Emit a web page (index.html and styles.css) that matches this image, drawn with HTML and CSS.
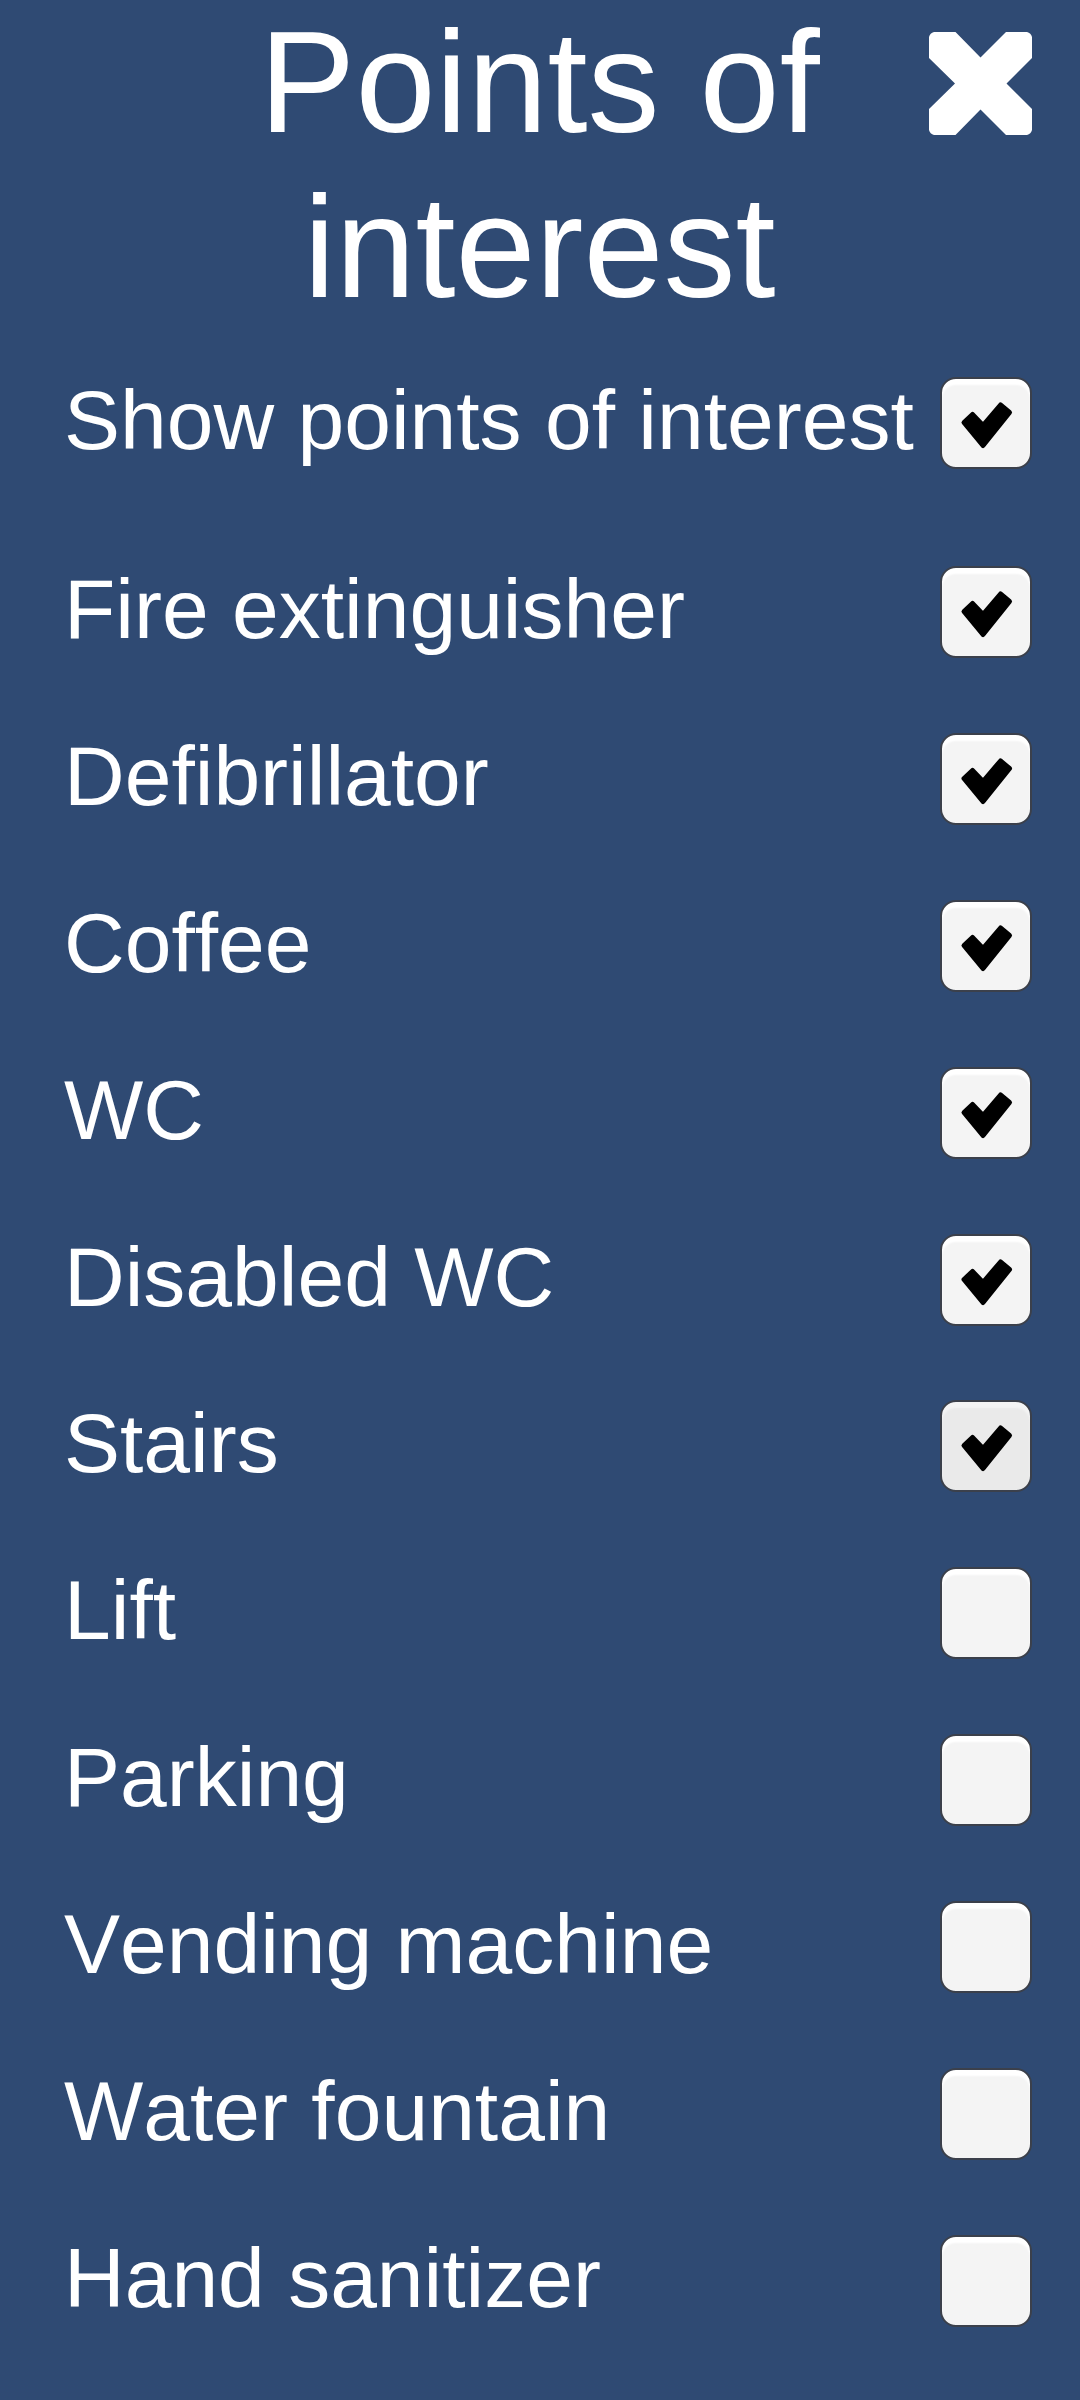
FILE: index.html
```html
<!DOCTYPE html>
<html lang="en">
<head>
<meta charset="utf-8">
<meta name="viewport" content="width=device-width, initial-scale=1">
<title>Points of interest</title>
<link rel="stylesheet" href="styles.css">
</head>
<body>
<svg class="symbols" aria-hidden="true">
  <symbol id="tick" viewBox="-1 -1 92 92">
    <path d="M23 44.5 31.5 36.5 42 47.5 59.5 27 68.5 34.5 42 67.5Z" stroke="currentColor" stroke-width="5" stroke-linejoin="round" fill="currentColor"/>
  </symbol>
</svg>
<main class="panel">
  <header class="header">
    <h1 class="title">Points of interest</h1>
    <button class="close" type="button" aria-label="Close">
      <svg class="close-icon" viewBox="0 0 103 103" aria-hidden="true"><path fill="currentColor" d="M0 5Q1 1 5 0H26.500L51.500 25.500 77 0H98Q102 1 103 5V26L77.500 51.500 103 77V98Q102 102 98 103H77L51.500 77.500 26.500 103H5Q1 102 0 98V77L26 51.500 0 26Z"/></svg>
    </button>
  </header>
  <label class="row"><span class="name">Show points of interest</span><span class="toggle"><input class="box" type="checkbox" checked><svg class="tick"><use href="#tick"/></svg></span></label>
  <div class="list">
    <label class="row"><span class="name">Fire extinguisher</span><span class="toggle"><input class="box" type="checkbox" checked><svg class="tick"><use href="#tick"/></svg></span></label>
    <label class="row"><span class="name">Defibrillator</span><span class="toggle"><input class="box" type="checkbox" checked><svg class="tick"><use href="#tick"/></svg></span></label>
    <label class="row"><span class="name">Coffee</span><span class="toggle"><input class="box" type="checkbox" checked><svg class="tick"><use href="#tick"/></svg></span></label>
    <label class="row"><span class="name">WC</span><span class="toggle"><input class="box" type="checkbox" checked><svg class="tick"><use href="#tick"/></svg></span></label>
    <label class="row"><span class="name">Disabled WC</span><span class="toggle"><input class="box" type="checkbox" checked><svg class="tick"><use href="#tick"/></svg></span></label>
    <label class="row"><span class="name">Stairs</span><span class="toggle"><input class="box box-active" type="checkbox" checked><svg class="tick"><use href="#tick"/></svg></span></label>
    <label class="row"><span class="name">Lift</span><span class="toggle"><input class="box" type="checkbox"><svg class="tick"><use href="#tick"/></svg></span></label>
    <label class="row"><span class="name">Parking</span><span class="toggle"><input class="box" type="checkbox"><svg class="tick"><use href="#tick"/></svg></span></label>
    <label class="row"><span class="name">Vending machine</span><span class="toggle"><input class="box" type="checkbox"><svg class="tick"><use href="#tick"/></svg></span></label>
    <label class="row"><span class="name">Water fountain</span><span class="toggle"><input class="box" type="checkbox"><svg class="tick"><use href="#tick"/></svg></span></label>
    <label class="row"><span class="name">Hand sanitizer</span><span class="toggle"><input class="box" type="checkbox"><svg class="tick"><use href="#tick"/></svg></span></label>
  </div>
</main>
</body>
</html>
```
FILE: styles.css
```css
* {
  box-sizing: border-box;
}

body {
  margin: 0;
  background: #2f4a73;
  color: #fff;
  font-family: "Liberation Sans", Arial, sans-serif;
  font-kerning: none;
}

.symbols {
  display: none;
}

.panel {
  display: flex;
  flex-direction: column;
  min-height: 100vh;
  padding: 0 48px 73px 64px;
}

.header {
  display: grid;
  grid-template-columns: 86px 1fr 103px;
  align-items: start;
  margin-bottom: 47px;
}

.title {
  grid-column: 2;
  margin: 0;
  font-size: 144px;
  font-weight: 400;
  line-height: 165px;
  text-align: center;
}

.close {
  margin: 32px 0 0;
  padding: 0;
  border: 0;
  background: none;
  color: #fff;
  cursor: pointer;
}

.close-icon {
  display: block;
  width: 103px;
  height: 103px;
}

.list {
  display: flex;
  flex: 1;
  flex-direction: column;
  justify-content: space-between;
  gap: 24px;
  margin-top: 97px;
}

.row {
  display: flex;
  align-items: center;
  justify-content: space-between;
  min-height: 92px;
  cursor: pointer;
}

.name {
  padding-bottom: 6px;
  font-size: 84px;
  line-height: 84px;
}

.toggle {
  display: grid;
  flex: none;
}

.box,
.tick {
  grid-area: 1 / 1;
  width: 92px;
  height: 92px;
}

.box {
  margin: 0;
  appearance: none;
  border: 2px solid #3b404b;
  border-radius: 16px;
  background: #f4f4f4;
  box-shadow: inset 0 6px 2px #fff;
}

.box-active {
  background: #eaeaea;
  box-shadow: inset 0 6px 2px #f4f4f4;
}

.tick {
  color: #000;
  pointer-events: none;
  visibility: hidden;
}

.box:checked + .tick {
  visibility: visible;
}
```
